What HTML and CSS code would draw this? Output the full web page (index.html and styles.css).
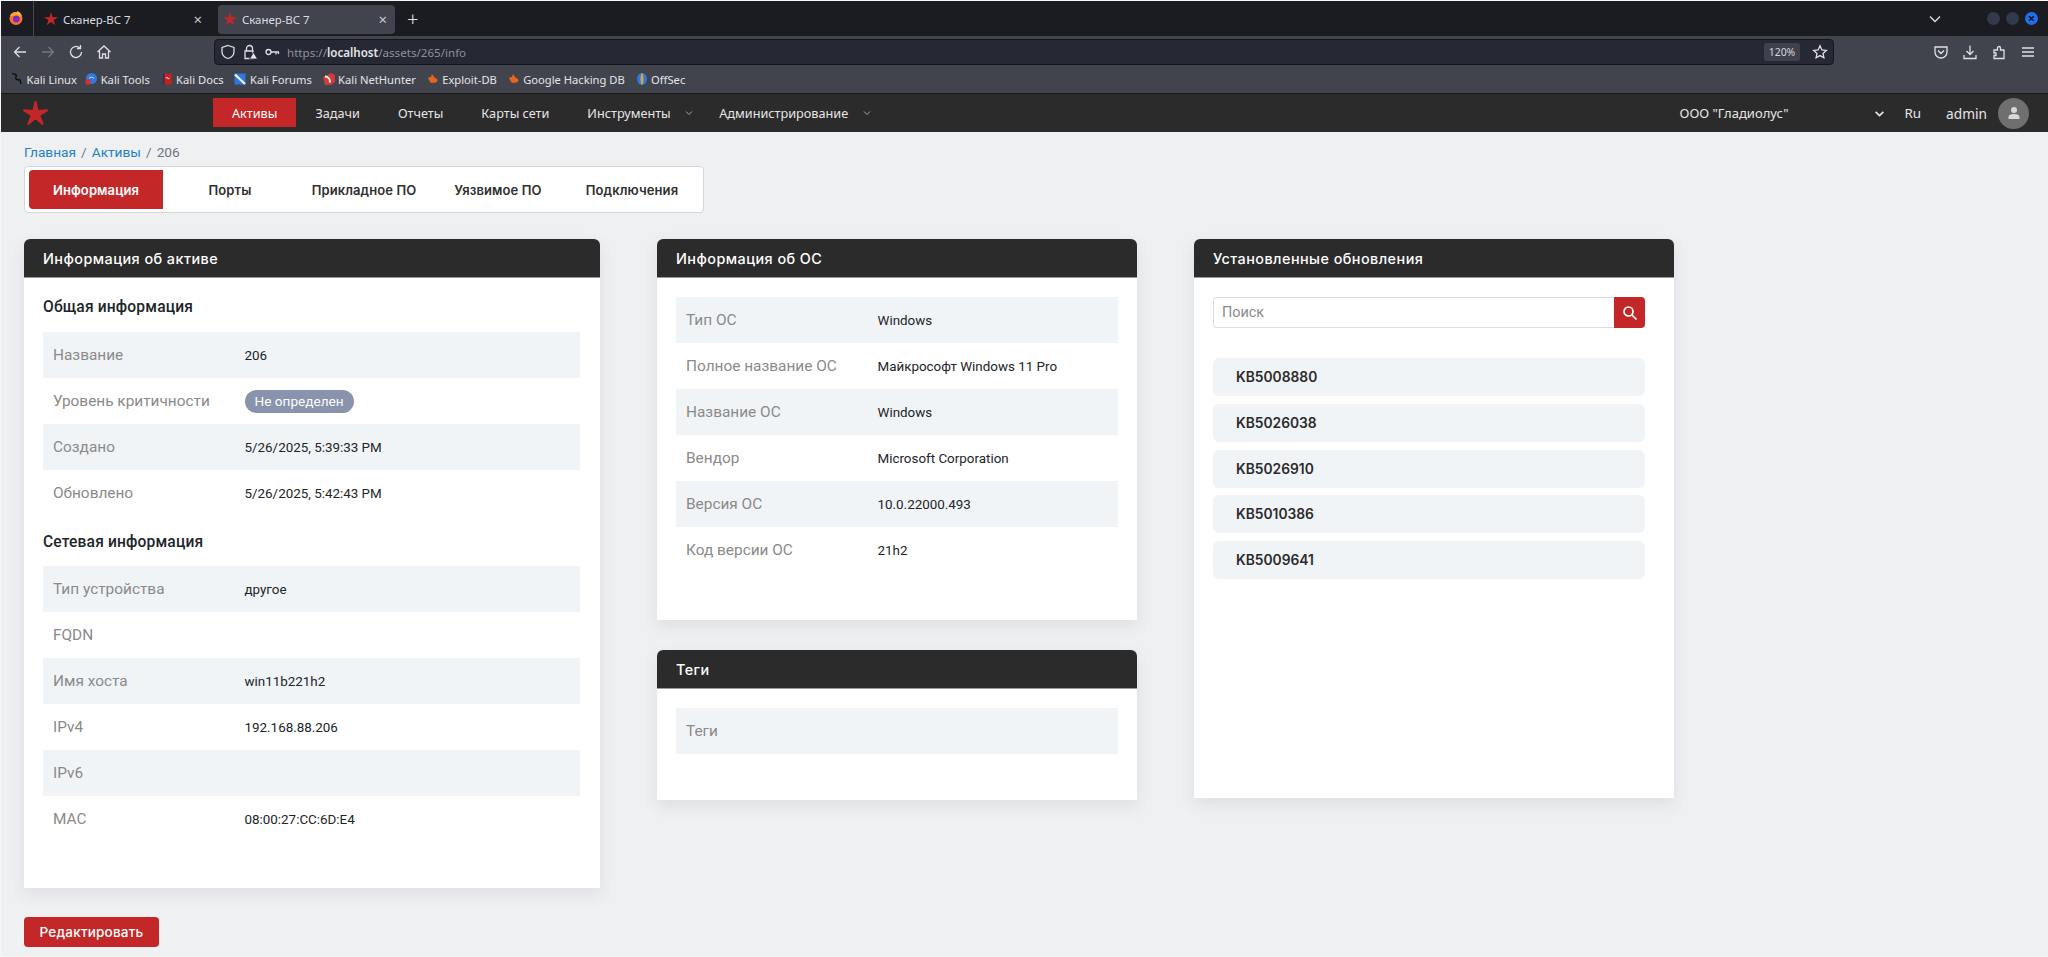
FILE: index.html
```html
<!DOCTYPE html>
<html lang="ru">
<head>
<meta charset="utf-8">
<title>Сканер-ВС 7</title>
<link rel="stylesheet" href="styles.css">
</head>
<body>
<svg class="defs" width="0" height="0" aria-hidden="true"><defs>
<path id="star" d="M12 1.500L14.350 9.260L22.460 9.100L15.800 13.740L18.470 21.400L12 16.500L5.530 21.400L8.200 13.740L1.540 9.100L9.650 9.260Z"/>
</defs></svg>
<header class="browser">
  <div class="tabstrip">
    <div class="ffbox"><svg class="ff" viewBox="0 0 16 16"><circle cx="8" cy="8.500" r="6.500" fill="#f5742a"/><path d="M2 6a6.500 6.500 0 0 1 12 0l-2 1z" fill="#f9a42b"/><circle cx="8.300" cy="8.900" r="3.400" fill="#7b2cbf"/><path d="M9 1c2 .5 3.500 2 4 3.500L10 4z" fill="#ffc83a"/></svg></div>
    <div class="tab">
      <svg class="tabstar" viewBox="0 0 24 24"><use href="#star"/></svg><span class="tabtitle">Сканер-ВС 7</span><span class="tabclose">×</span>
    </div>
    <div class="tab tab-active">
      <svg class="tabstar" viewBox="0 0 24 24"><use href="#star"/></svg><span class="tabtitle">Сканер-ВС 7</span><span class="tabclose">×</span>
    </div>
    <span class="newtab">+</span>
    <span class="grow"></span>
    <svg class="ico tablist" viewBox="0 0 16 16"><path d="M3 5.500l5 5 5-5"/></svg>
    <div class="winbtns"><i class="win"></i><i class="win"></i><i class="win win-close">×</i></div>
  </div>
  <div class="navrow">
    <div class="navbtns">
      <svg class="ico" viewBox="0 0 16 16"><path d="M14 8H2.500M7.500 3l-5 5 5 5"/></svg>
      <svg class="ico ico-dim" viewBox="0 0 16 16"><path d="M2 8h11.500M8.500 3l5 5-5 5"/></svg>
      <svg class="ico" viewBox="0 0 16 16"><path d="M13.500 8a5.500 5.500 0 1 1-1.700-4M12.500 1v3.500H9"/></svg>
      <svg class="ico" viewBox="0 0 16 16"><path d="M1.500 8L8 2l6.500 6M3.500 7v7h3v-4h3v4h3V7"/></svg>
    </div>
    <div class="urlbar">
      <svg class="ico" viewBox="0 0 16 16"><path d="M8 1.500l6 2v4c0 3.500-2.500 6-6 7-3.500-1-6-3.500-6-7v-4z"/></svg>
      <svg class="ico" viewBox="0 0 16 16"><path d="M4.500 7V4.500a3 3 0 0 1 6 0V7M3 7h8v7.500H3z"/><path class="warn" d="M11.500 8.500l4 6.500h-8z"/></svg>
      <svg class="ico ico-key" viewBox="0 0 16 16"><circle cx="4.500" cy="8" r="2.500"/><path d="M7 8h8M12 8v2.500M14.500 8v2"/></svg>
      <span class="url">https://<b>localhost</b>/assets/265/info</span>
      <span class="grow"></span>
      <span class="zoomchip">120%</span>
      <svg class="ico" viewBox="0 0 16 16"><path d="M8 1.800l1.900 4.100 4.400.5-3.300 3 .9 4.400L8 11.600l-3.900 2.200.9-4.400-3.300-3 4.400-.5z"/></svg>
    </div>
    <div class="tools">
      <svg class="ico" viewBox="0 0 16 16"><path d="M2 3h12v5a6 6 0 0 1-12 0zM5 6.500L8 9.500l3-3"/></svg>
      <svg class="ico" viewBox="0 0 16 16"><path d="M8 1.500v9M4.500 7L8 10.500 11.500 7M2 11v3.500h12V11"/></svg>
      <svg class="ico" viewBox="0 0 16 16"><path d="M3 6h3.500V4a1.500 1.500 0 0 1 3 0v2H13v8.500H3v-3h2v-2.500H3z"/></svg>
      <svg class="ico" viewBox="0 0 16 16"><path d="M2 4h12M2 8h12M2 12h12"/></svg>
    </div>
  </div>
  <div class="bookmarks">
    <a class="bm"><svg viewBox="0 0 12 12"><path d="M1 1c3-.5 5 .5 4 3S6 7 9 7l1 4" fill="none" stroke="#0d0d0f" stroke-width="1.400"/></svg>Kali Linux</a>
    <a class="bm"><svg viewBox="0 0 12 12"><circle cx="6.500" cy="5.500" r="5.500" fill="#2f7bdc"/><path d="M4 5.500a3 3 0 0 1 5 0" fill="none" stroke="#cfe2fa"/><rect x="0.500" y="6.500" width="5" height="5" rx="1" fill="#d83030"/></svg>Kali Tools</a>
    <a class="bm"><svg viewBox="0 0 12 12"><rect x="2" y="0.500" width="8.500" height="11" fill="#c81e1e"/><rect x="2" y="0.500" width="1.500" height="11" fill="#2c2c60"/><path d="M4.500 5l1.500-1 1 2 1.500-1" fill="none" stroke="#fff" stroke-width=".8"/></svg>Kali Docs</a>
    <a class="bm"><svg viewBox="0 0 12 12"><rect x="0.500" y="0.500" width="11" height="11" fill="#2a78e0"/><path d="M1 1.500L11 11" stroke="#f0f0f0" stroke-width="2.400"/></svg>Kali Forums</a>
    <a class="bm"><svg viewBox="0 0 12 12"><path d="M0 4l8-4 4 2v7l-4 3H2z" fill="#d33a3a"/><path d="M2 3.500c3 0 5 2.500 5 6" fill="none" stroke="#eee" stroke-width="2"/></svg>Kali NetHunter</a>
    <a class="bm"><svg viewBox="0 0 12 12"><path d="M1 5c1-1 2-1 3-1l1-3 2 3 4 3-2 2.500-5 .5-2-3z" fill="#e8651e"/></svg>Exploit-DB</a>
    <a class="bm"><svg viewBox="0 0 12 12"><path d="M1 5c1-1 2-1 3-1l1-3 2 3 4 3-2 2.500-5 .5-2-3z" fill="#e8651e"/></svg>Google Hacking DB</a>
    <a class="bm"><svg viewBox="0 0 12 12"><ellipse cx="6" cy="6" rx="5" ry="6" fill="#2d78dc"/><ellipse cx="6" cy="6" rx="1.500" ry="6" fill="#d9a247"/></svg>OffSec</a>
  </div>
</header>
<nav class="topnav">
  <svg class="logo" viewBox="0 0 24 24"><path d="M12 2.500L13.760 10.070L21.510 9.410L14.850 13.430L17.880 20.590L12 15.500L6.120 20.590L9.150 13.430L2.490 9.410L10.240 10.070Z"/></svg>
  <ul class="menu">
    <li class="menu-item menu-active">Активы</li>
    <li class="menu-item">Задачи</li>
    <li class="menu-item">Отчеты</li>
    <li class="menu-item">Карты сети</li>
    <li class="menu-item">Инструменты<svg class="caret" viewBox="0 0 10 10"><path d="M2 3.500l3 3 3-3"/></svg></li>
    <li class="menu-item">Администрирование<svg class="caret" viewBox="0 0 10 10"><path d="M2 3.500l3 3 3-3"/></svg></li>
  </ul>
  <span class="grow"></span>
  <div class="org">ООО "Гладиолус"<svg class="org-caret" viewBox="0 0 10 10"><path d="M1.500 3.500L5 7l3.500-3.500"/></svg></div>
  <span class="lang">Ru</span>
  <span class="user">admin</span>
  <span class="avatar"><svg viewBox="0 0 16 16"><circle cx="8" cy="5" r="3"/><path d="M2.500 14v-2c0-2 2-3 5.500-3s5.500 1 5.500 3v2z"/></svg></span>
</nav>
<main class="page">
  <div class="crumbs"><a>Главная</a><span class="sep">/</span><a>Активы</a><span class="sep">/</span><span class="cur">206</span></div>
  <div class="tabs">
    <a class="pagetab pagetab-active">Информация</a>
    <a class="pagetab">Порты</a>
    <a class="pagetab">Прикладное ПО</a>
    <a class="pagetab">Уязвимое ПО</a>
    <a class="pagetab">Подключения</a>
  </div>
  <div class="columns">
    <section class="card">
      <h2 class="card-head">Информация об активе</h2>
      <div class="card-body card-body-main">
        <h3 class="subhead">Общая информация</h3>
        <div class="row"><span class="lbl">Название</span><span class="val">206</span></div>
        <div class="row"><span class="lbl">Уровень критичности</span><span class="badge">Не определен</span></div>
        <div class="row"><span class="lbl">Создано</span><span class="val">5/26/2025, 5:39:33 PM</span></div>
        <div class="row"><span class="lbl">Обновлено</span><span class="val">5/26/2025, 5:42:43 PM</span></div>
        <h3 class="subhead subhead-next">Сетевая информация</h3>
        <div class="row"><span class="lbl">Тип устройства</span><span class="val">другое</span></div>
        <div class="row"><span class="lbl">FQDN</span><span class="val"></span></div>
        <div class="row"><span class="lbl">Имя хоста</span><span class="val">win11b221h2</span></div>
        <div class="row"><span class="lbl">IPv4</span><span class="val">192.168.88.206</span></div>
        <div class="row"><span class="lbl">IPv6</span><span class="val"></span></div>
        <div class="row"><span class="lbl">MAC</span><span class="val">08:00:27:CC:6D:E4</span></div>
      </div>
    </section>
    <div class="stack">
      <section class="card">
        <h2 class="card-head">Информация об ОС</h2>
        <div class="card-body">
          <div class="row"><span class="lbl">Тип ОС</span><span class="val">Windows</span></div>
          <div class="row"><span class="lbl">Полное название ОС</span><span class="val">Майкрософт Windows 11 Pro</span></div>
          <div class="row"><span class="lbl">Название ОС</span><span class="val">Windows</span></div>
          <div class="row"><span class="lbl">Вендор</span><span class="val">Microsoft Corporation</span></div>
          <div class="row"><span class="lbl">Версия ОС</span><span class="val">10.0.22000.493</span></div>
          <div class="row"><span class="lbl">Код версии ОС</span><span class="val">21h2</span></div>
        </div>
      </section>
      <section class="card">
        <h2 class="card-head">Теги</h2>
        <div class="card-body card-body-tags">
          <div class="row"><span class="lbl">Теги</span><span class="val"></span></div>
        </div>
      </section>
    </div>
    <section class="card card-updates">
      <h2 class="card-head">Установленные обновления</h2>
      <div class="card-body card-body-updates">
        <div class="search">
          <input class="search-input" placeholder="Поиск">
          <button class="search-btn"><svg viewBox="0 0 16 16"><circle cx="6.500" cy="6.500" r="4.500"/><path d="M10 10l4.500 4.500"/></svg></button>
        </div>
        <ul class="kb-list">
          <li class="kb">KB5008880</li>
          <li class="kb">KB5026038</li>
          <li class="kb">KB5026910</li>
          <li class="kb">KB5010386</li>
          <li class="kb">KB5009641</li>
        </ul>
      </div>
    </section>
  </div>
  <button class="edit">Редактировать</button>
</main>
</body>
</html>
```
FILE: styles.css
```css
* { box-sizing: border-box; }
html, body { margin: 0; height: 100%; }
body { height: 957px; overflow: hidden; background: #f6f6f6; padding: 1px 0 1px 1px; display: flex; flex-direction: column; font-family: Roboto, "Noto Sans", sans-serif; color: #212529; }
.defs { position: absolute; }
.grow { flex: 1; }
ul { list-style: none; margin: 0; padding: 0; }
h2, h3 { margin: 0; }

.browser { font-family: "Noto Sans", sans-serif; color: #e4e4e8; }
.ico { width: 16px; height: 16px; fill: none; stroke: #dfdfe3; stroke-width: 1.300; flex: none; }
.ico-dim { stroke: #75777f; }
.warn { fill: #e8e8ea; stroke: #262834; stroke-width: .8; }

.tabstrip { height: 35px; background: #1b1c21; display: flex; align-items: center; padding-left: 7px; }
.ffbox { width: 26px; height: 35px; display: flex; align-items: center; border-right: 1px solid #4a4a4e; }
.ff { width: 16px; height: 16px; margin-top: -1px; }
.tab { width: 171px; height: 29px; margin-top: 1px; margin-right: 8px; display: flex; align-items: center; padding: 0 8px 0 4px; border-radius: 4px; font-size: 11.400px; }
.tabstrip .tab:nth-of-type(2) { margin-left: 5px; }
.tab-active { width: 177px; background: #42444d; }
.tabstar { width: 16px; height: 16px; fill: #c42727; flex: none; margin-right: 4px; }
.tabtitle { flex: 1; color: #dcdce0; }
.tabclose { color: #c9c9cd; font-size: 15px; }
.newtab { font-size: 20px; color: #e4e4e8; margin-left: 4px; font-weight: 300; }
.tablist { margin-right: 44px; }
.winbtns { display: flex; gap: 6px; margin-right: 10px; }
.win { width: 13px; height: 13px; border-radius: 50%; background: #343a4e; display: block; font-style: normal; }
.win-close { background: #1f6feb; color: #10131c; font-size: 13px; line-height: 12px; text-align: center; font-weight: 700; }

.navrow { height: 32px; background: #42444d; display: flex; align-items: center; padding: 0 12px 0 11px; }
.navbtns { display: flex; gap: 12px; width: 202px; }
.urlbar { flex: 1; max-width: 1620px; height: 26px; background: #262834; border: 1px solid #15161b; border-radius: 4px; display: flex; align-items: center; padding: 0 5px; gap: 6px; font-size: 11.600px; }
.ico-key { margin-right: 1px; }
.url { color: #8f9199; }
.url b { font-weight: 600; color: #e4e4e8; }
.zoomchip { background: #3f414d; height: 18px; width: 36px; font-size: 10.400px; line-height: 18px; text-align: center; border-radius: 3px; margin-right: 6px; color: #d8d8dc; }
.tools { display: flex; gap: 13px; margin-left: auto; }

.bookmarks { height: 25px; background: #42444d; display: flex; align-items: center; padding: 0 0 3px 10px; gap: 10.800px; }
.bm { display: flex; align-items: center; font-size: 11.200px; gap: 3.500px; color: #e4e4e8; }
.bm:first-child { margin-right: -2.500px; }
.bm svg { width: 12px; height: 12px; flex: none; }

.topnav { height: 39px; background: #2b2b2b; border-top: 1px solid #1a1a1c; display: flex; align-items: center; padding: 0 19px 0 20px; font-family: "Noto Sans", sans-serif; color: #e6e6e6; font-size: 12.700px; }
.logo { width: 29px; height: 29px; fill: #c42727; stroke: #c42727; stroke-width: 1.800; stroke-linejoin: round; flex: none; margin-right: 163px; }
.menu { display: flex; align-self: flex-start; margin-top: 4px; }
.menu-item { height: 29px; display: flex; align-items: center; padding: 0 19px; white-space: nowrap; }
.menu-active { background: #c42727; color: #fff; }
.caret { width: 10px; height: 10px; fill: none; stroke: #a9a9a9; stroke-width: 1; margin-left: 13.500px; margin-right: -13px; }
.org { display: flex; align-items: center; width: 205px; justify-content: space-between; font-size: 13px; }
.org-caret { width: 11px; height: 11px; fill: none; stroke: #e6e6e6; stroke-width: 1.500; }
.lang { margin-left: 20px; font-size: 13.400px; }
.user { margin-left: 25px; font-size: 13.700px; }
.avatar { width: 31px; height: 31px; background: #6f6f6f; border-radius: 50%; margin-left: 11px; display: flex; align-items: center; justify-content: center; }
.avatar svg { width: 16px; height: 16px; fill: #d8d8d8; }

.page { flex: 1; background: #eff0f2; padding: 0 23px; }
.crumbs { height: 34px; padding-top: 5px; display: flex; align-items: center; font-size: 13.700px; }
.crumbs a { color: #1d82c8; }
.sep { color: #7a7a7a; margin: 0 5px; }
.cur { color: #6c757d; }
.tabs { width: 680px; height: 47px; background: #fff; border: 1px solid #d4d6da; border-radius: 4px; display: flex; align-items: center; padding-left: 4px; }
.pagetab { width: 134px; height: 39px; display: flex; align-items: center; justify-content: center; font: 600 13px Inter, sans-serif; letter-spacing: .1px; color: #2f2f2f; }
.pagetab-active { background: #c42727; color: #fff; border-radius: 4px 0 0 4px; }

.columns { display: grid; grid-template-columns: 576px 480px 480px; column-gap: 57px; margin-top: 26px; align-items: start; }
.stack { display: flex; flex-direction: column; gap: 30px; }
.card { background: #fff; border-radius: 6px 6px 0 0; box-shadow: 0 6px 16px rgba(60, 64, 75, .1); }
.card-updates { height: 559px; }
.card-head { height: 39px; background: #2b2b2b; color: #fff; border-radius: 6px 6px 0 0; padding: 0 19px; display: flex; align-items: center; font: 500 14.400px Inter, sans-serif; letter-spacing: .45px; border-bottom: 1px solid #9a9a9a; }
.card-body { padding: 19px 19px 47px; }
.card-body-main { padding: 19px 20px 46px 19px; }
.card-body-tags { padding-bottom: 46px; }
.card-body-updates { padding-right: 29px; }
.subhead { font-size: 15.600px; font-weight: 500; letter-spacing: .15px; color: #212529; height: 35px; line-height: 20px; }
.subhead-next { margin-top: 15px; line-height: 22px; }
.row { height: 46px; display: flex; align-items: center; padding-left: 10px; }
.row:nth-of-type(odd) { background: #f1f4f7; }
.lbl { width: 191.500px; font-size: 15.400px; color: #8a8a8a; flex: none; }
.val { font-size: 13.400px; color: #212529; }
.badge { background: #8993ad; color: #fff; font-size: 13.600px; height: 23px; line-height: 22px; padding: 0 10px; border-radius: 12px; }

.search { display: flex; height: 31px; }
.search-input { flex: 1; min-width: 0; border: 1px solid #d8dde6; border-right: 0; border-radius: 4px 0 0 4px; font: 14.400px Roboto, sans-serif; padding: 0 8px; outline: 0; }
.search-input::placeholder { color: #8a8a8a; }
.search-btn { width: 31px; background: #c42727; border: 0; border-radius: 0 4px 4px 0; padding: 0; display: flex; align-items: center; justify-content: center; }
.search-btn svg { width: 16px; height: 16px; fill: none; stroke: #fff; stroke-width: 1.700; }
.kb-list { margin-top: 30px; display: flex; flex-direction: column; gap: 7.750px; }
.kb { height: 38px; background: #f1f4f7; border-radius: 6px; padding-left: 23px; display: flex; align-items: center; font: 600 13.800px Inter, sans-serif; color: #2b2b2b; }

.edit { display: block; margin-top: 29px; width: 135px; height: 30px; background: #c42727; color: #fff; border: 0; border-radius: 4px; font: 500 13.500px Inter, sans-serif; letter-spacing: .2px; }
```
